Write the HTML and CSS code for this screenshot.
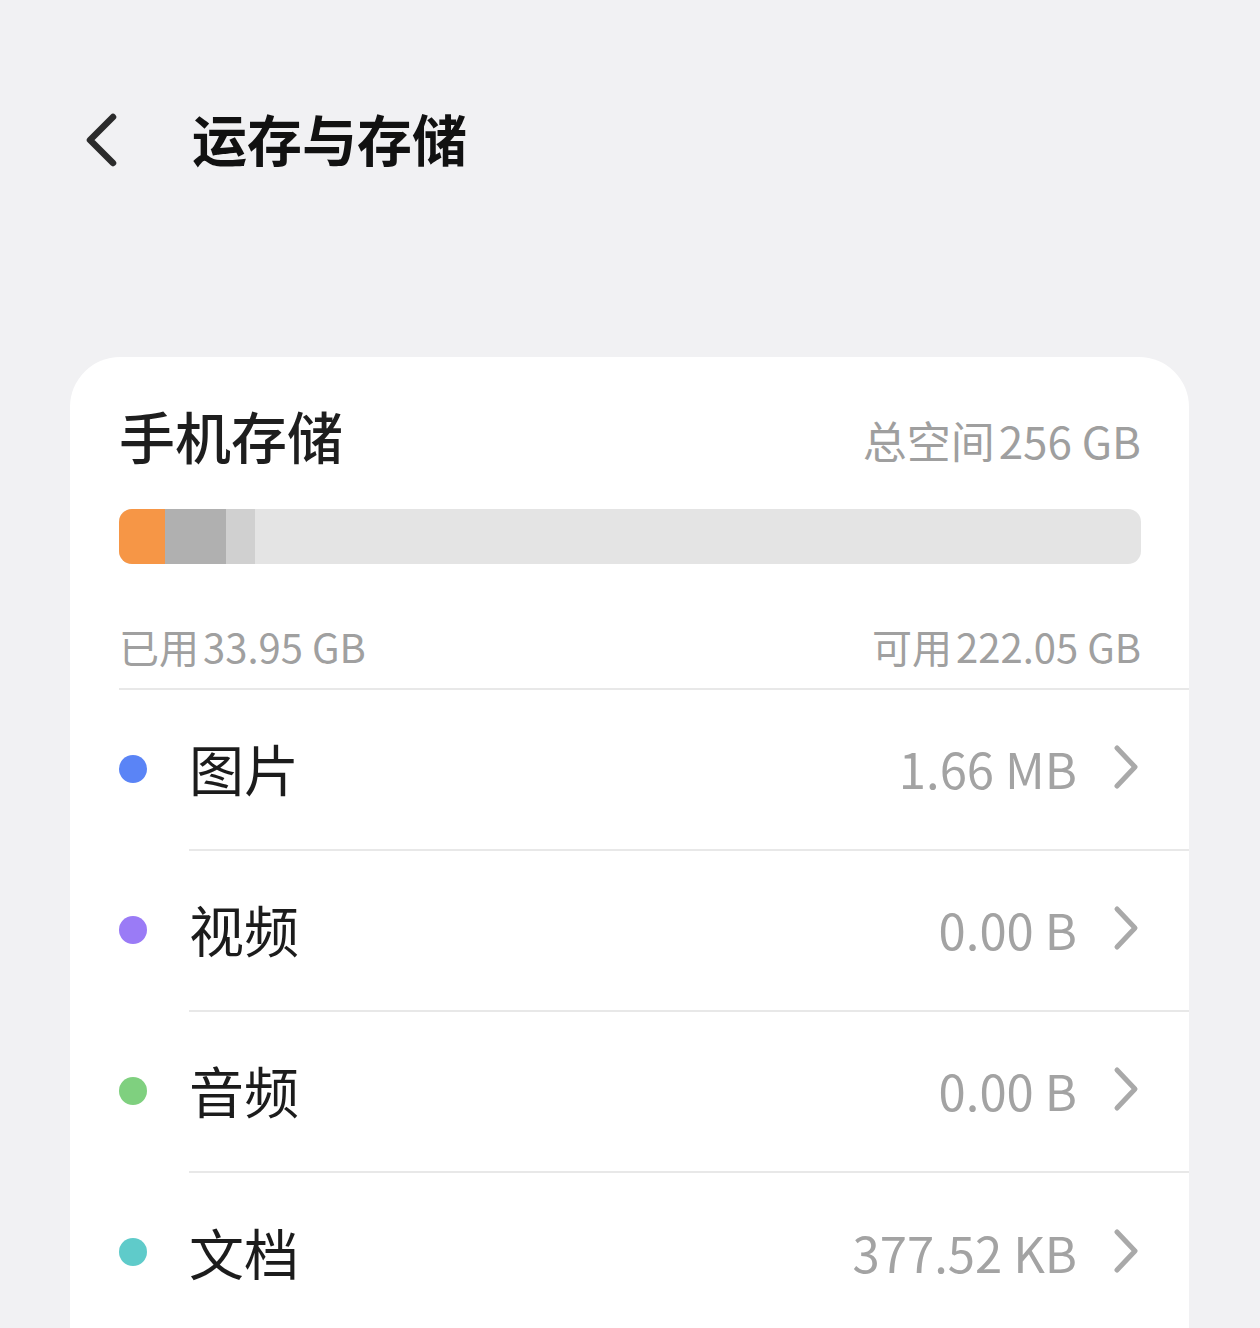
FILE: index.html
```html
<!DOCTYPE html>
<html lang="zh-CN">
<head>
<meta charset="utf-8">
<title>运存与存储</title>
<link rel="stylesheet" href="styles.css">
</head>
<body>
<header class="topbar">
  <svg class="back" viewBox="0 0 40 56" width="40" height="56" aria-hidden="true">
    <path d="M33 5 L10 28 L33 51" fill="none" stroke="#2b2b2b" stroke-width="6.5" stroke-linecap="round" stroke-linejoin="round"/>
  </svg>
  <h1 class="title">运存与存储</h1>
</header>

<section class="card">
  <div class="summary">
    <div class="summary-head">
      <h2 class="heading">手机存储</h2>
      <span class="total">总空间<span class="num">256 GB</span></span>
    </div>
    <div class="bar">
      <span class="seg seg-orange" style="width:46px"></span>
      <span class="seg seg-dark" style="width:61px"></span>
      <span class="seg seg-light" style="width:29px"></span>
    </div>
    <div class="summary-foot">
      <span>已用<span class="num">33.95 GB</span></span>
      <span>可用<span class="num">222.05 GB</span></span>
    </div>
  </div>

  <div class="row">
    <span class="dot dot-blue"></span>
    <div class="main">
      <span class="label">图片</span>
      <span class="value">1.66 MB</span>
      <svg class="chev" viewBox="0 0 30 46" width="30" height="46" aria-hidden="true"><path d="M6 4 L24 23 L6 42" fill="none" stroke="#a9a9a9" stroke-width="5" stroke-linecap="round" stroke-linejoin="round"/></svg>
    </div>
  </div>
  <div class="row">
    <span class="dot dot-purple"></span>
    <div class="main">
      <span class="label">视频</span>
      <span class="value">0.00 B</span>
      <svg class="chev" viewBox="0 0 30 46" width="30" height="46" aria-hidden="true"><path d="M6 4 L24 23 L6 42" fill="none" stroke="#a9a9a9" stroke-width="5" stroke-linecap="round" stroke-linejoin="round"/></svg>
    </div>
  </div>
  <div class="row">
    <span class="dot dot-green"></span>
    <div class="main">
      <span class="label">音频</span>
      <span class="value">0.00 B</span>
      <svg class="chev" viewBox="0 0 30 46" width="30" height="46" aria-hidden="true"><path d="M6 4 L24 23 L6 42" fill="none" stroke="#a9a9a9" stroke-width="5" stroke-linecap="round" stroke-linejoin="round"/></svg>
    </div>
  </div>
  <div class="row">
    <span class="dot dot-teal"></span>
    <div class="main">
      <span class="label">文档</span>
      <span class="value">377.52 KB</span>
      <svg class="chev" viewBox="0 0 30 46" width="30" height="46" aria-hidden="true"><path d="M6 4 L24 23 L6 42" fill="none" stroke="#a9a9a9" stroke-width="5" stroke-linecap="round" stroke-linejoin="round"/></svg>
    </div>
  </div>
</section>
</body>
</html>
```

FILE: styles.css
```css
html, body {
  margin: 0;
  padding: 0;
  background: #f1f1f3;
  font-family: "Noto Sans CJK SC", "Noto Sans", sans-serif;
  height: 1328px;
  overflow: hidden;
}

.topbar {
  display: flex;
  align-items: center;
  padding: 109px 0 0 80px;
  height: 56px;
}

.back {
  display: block;
  flex: none;
  margin-top: 6px;
}

.title {
  margin: 0 0 0 72px;
  font-size: 55px;
  line-height: 1;
  font-weight: 700;
  color: #111;
}

.card {
  margin: 192px 71px 0 70px;
  background: #fff;
  border-radius: 50px 50px 0 0;
  padding-left: 49px;
}

.summary {
  padding: 50px 48px 22px 0;
  border-bottom: 2px solid #e8e8e8;
}

.summary-head {
  display: flex;
  justify-content: space-between;
  align-items: baseline;
}

.heading {
  margin: 0;
  font-size: 56px;
  line-height: 1;
  font-weight: 500;
  color: #1e1e1e;
}

.total {
  font-size: 44px;
  line-height: 1;
  color: #9f9f9f;
}

.num {
  margin-left: 4px;
}

.bar {
  margin-top: 46px;
  height: 55px;
  border-radius: 13px;
  background: #e4e4e4;
  overflow: hidden;
  display: flex;
}

.seg { display: block; height: 100%; }
.seg-orange { background: #f69646; }
.seg-dark { background: #b0b0b0; }
.seg-light { background: #d0d0d0; }

.summary-foot {
  margin-top: 62px;
  display: flex;
  justify-content: space-between;
  font-size: 40px;
  line-height: 1;
  color: #a0a0a0;
}

.row {
  display: flex;
  align-items: stretch;
  height: 161px;
}

.dot {
  flex: none;
  align-self: center;
  width: 28px;
  height: 28px;
  border-radius: 50%;
  margin-right: 42px;
  margin-top: -4px;
}
.dot-blue { background: #5a84f6; }
.dot-purple { background: #9a7bf6; }
.dot-green { background: #7fd07f; }
.dot-teal { background: #5fcbca; }

.main {
  flex: 1;
  display: flex;
  align-items: center;
  padding-right: 48px;
  border-bottom: 2px solid #e8e8e8;
}

.row:last-child .main { border-bottom: none; }

.label {
  flex: 1;
  font-size: 55px;
  color: #1c1c1c;
  line-height: 1;
  margin-top: -4px;
}

.value {
  font-size: 49px;
  color: #a3a3a3;
  line-height: 1;
  margin-right: 34px;
  margin-top: -4px;
}

.chev {
  display: block;
  flex: none;
  margin-top: -6px;
}
```
